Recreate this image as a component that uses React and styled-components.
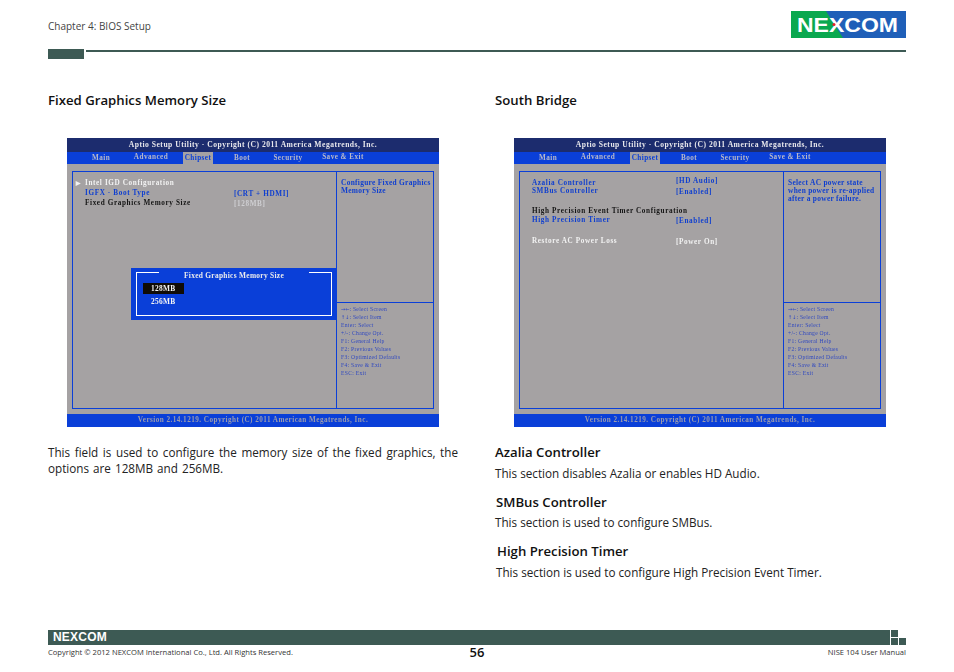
import styled, { createGlobalStyle } from 'styled-components';

const GlobalStyle = createGlobalStyle`
    html, body {
        margin: 0;
        padding: 0;
        background: #ffffff;
    }
`;

const DARK = '#3d5a54';
const BLUE = '#0a3fd8';
const GRAY = '#a5a2a3';

const helpKeys = [
    { glyph: '→←', text: ': Select Screen' },
    { glyph: '↑↓', text: ': Select Item' },
    { text: 'Enter: Select' },
    { text: '+/-: Change Opt.' },
    { text: 'F1: General Help' },
    { text: 'F2: Previous Values' },
    { text: 'F3: Optimized Defaults' },
    { text: 'F4: Save & Exit' },
    { text: 'ESC: Exit' },
];

const tabs = [
    { name: 'Main', width: 40 },
    { name: 'Advanced', width: 60, raised: true },
    { name: 'Chipset', width: 30, active: true },
    { name: 'Boot', width: 58 },
    { name: 'Security', width: 34 },
    { name: 'Save & Exit', width: 76, raised: true },
];

function BiosScreen({ help, children }) {
    return (
        <Bios>
            <BiosTitle>Aptio Setup Utility - Copyright (C) 2011 America Megatrends, Inc.</BiosTitle>
            <TabBar>
                {tabs.map((tab) => (
                    <Tab key={tab.name} $w={tab.width} $active={tab.active} $raised={tab.raised}>{tab.name}</Tab>
                ))}
            </TabBar>
            <BiosBody>
                <Frame>
                    <Settings>{children}</Settings>
                    <Side>
                        <HelpText>{help}</HelpText>
                        <Keys>
                            {helpKeys.map((k) => (
                                <div key={k.text}>
                                    {k.glyph && <KeyGlyph>{k.glyph}</KeyGlyph>}
                                    {k.text}
                                </div>
                            ))}
                        </Keys>
                    </Side>
                </Frame>
            </BiosBody>
            <BiosFooter>Version 2.14.1219. Copyright (C) 2011 American Megatrends, Inc.</BiosFooter>
        </Bios>
    );
}

function Logo() {
    return (
        <svg width="115" height="27" viewBox="0 0 115 27">
            <rect width="115" height="27" fill="#1f5fb8" />
            <polygon points="0,0 35,0 52,27 0,27" fill="#0aa84f" />
            <text x="6" y="21" fontFamily="Liberation Sans, sans-serif" fontWeight="700" fontSize="20.5" fill="#ffffff" textLength="101" lengthAdjust="spacingAndGlyphs">NEXCOM</text>
            <circle cx="43" cy="13.5" r="1.5" fill="#e8202a" />
        </svg>
    );
}

export default function App() {
    return (
        <Page>
            <GlobalStyle />
            <Header>
                <Chapter>Chapter 4: BIOS Setup</Chapter>
                <Logo />
            </Header>
            <Rule>
                <RuleBlock />
                <RuleLine />
            </Rule>
            <Columns>
                <Column>
                    <Heading>Fixed Graphics Memory Size</Heading>
                    <BiosWrap>
                        <BiosScreen help={<>Configure Fixed Graphics<br />Memory Size</>}>
                            <Row $tone="white">
                                <Arrow>►</Arrow>
                                <Label>Intel IGD Configuration</Label>
                            </Row>
                            <Row $tone="blue">
                                <Label>IGFX - Boot Type</Label>
                                <Value>[CRT + HDMI]</Value>
                            </Row>
                            <Row $tone="black">
                                <Label>Fixed Graphics Memory Size</Label>
                                <Value $tone="dim">[128MB]</Value>
                            </Row>
                        </BiosScreen>
                        <Popup>
                            <PopupFrame>
                                <PopupTitle>Fixed Graphics Memory Size</PopupTitle>
                                <PopupOption $selected>128MB</PopupOption>
                                <PopupOption>256MB</PopupOption>
                            </PopupFrame>
                        </Popup>
                    </BiosWrap>
                    <Paragraph>
                        This field is used to configure the memory size of the fixed graphics, the options are 128MB and 256MB.
                    </Paragraph>
                </Column>
                <Column>
                    <Heading>South Bridge</Heading>
                    <BiosWrap>
                        <BiosScreen help={<>Select AC power state<br />when power is re-applied<br />after a power failure.</>}>
                            <Row $tone="blue" $h={8}>
                                <Label $w={144}>Azalia Controller</Label>
                                <Value $raise={3}>[HD Audio]</Value>
                            </Row>
                            <Row $tone="blue" $h={12}>
                                <Label $w={144}>SMBus Controller</Label>
                                <Value>[Enabled]</Value>
                            </Row>
                            <Row $tone="black" $top={8} $h={9}>
                                <Label>High Precision Event Timer Configuration</Label>
                            </Row>
                            <Row $tone="blue" $h={12}>
                                <Label $w={144}>High Precision Timer</Label>
                                <Value>[Enabled]</Value>
                            </Row>
                            <Row $tone="white" $top={9}>
                                <Label $w={144}>Restore AC Power Loss</Label>
                                <Value>[Power On]</Value>
                            </Row>
                        </BiosScreen>
                    </BiosWrap>
                    <Section $top={17}>
                        <SectionTitle>Azalia Controller</SectionTitle>
                        <SectionText>This section disables Azalia or enables HD Audio.</SectionText>
                    </Section>
                    <Section $shift={1}>
                        <SectionTitle>SMBus Controller</SectionTitle>
                        <SectionText $shift={-1}>This section is used to configure SMBus.</SectionText>
                    </Section>
                    <Section $shift={2}>
                        <SectionTitle>High Precision Timer</SectionTitle>
                        <SectionText $shift={-1}>This section is used to configure High Precision Event Timer.</SectionText>
                    </Section>
                </Column>
            </Columns>
            <Footer>
                <FooterTop>
                    <FooterBar>
                        <FooterBrand>NEXCOM</FooterBrand>
                    </FooterBar>
                    <Squares>
                        <Square />
                        <span />
                        <Square />
                        <Square />
                    </Squares>
                </FooterTop>
                <FooterNotes>
                    <span>Copyright © 2012 NEXCOM International Co., Ltd. All Rights Reserved.</span>
                    <PageNumber>56</PageNumber>
                    <span>NISE 104 User Manual</span>
                </FooterNotes>
            </Footer>
        </Page>
    );
}

const Page = styled.div`
    box-sizing: border-box;
    width: 954px;
    height: 672px;
    padding: 11px 48px 0;
    font-family: 'Open Sans', sans-serif;
    color: #222;
    overflow: hidden;
    display: flex;
    flex-direction: column;
`;

const Header = styled.div`
    display: flex;
    justify-content: space-between;
    align-items: center;
    height: 27px;
`;

const Chapter = styled.div`
    font-size: 10px;
    padding-top: 2px;
    color: #444;
`;

const Rule = styled.div`
    display: flex;
    align-items: flex-start;
    gap: 2px;
    margin-top: 11px;
    height: 10px;
`;

const RuleBlock = styled.div`
    width: 36px;
    height: 10px;
    background: ${DARK};
`;

const RuleLine = styled.div`
    flex: 1;
    height: 2px;
    margin-top: 1px;
    background: ${DARK};
`;

const Columns = styled.div`
    display: grid;
    grid-template-columns: 410px 411px;
    column-gap: 37px;
    margin-top: 32px;
    flex: 1;
`;

const Column = styled.div`
    display: flex;
    flex-direction: column;
    align-items: flex-start;
`;

const Heading = styled.div`
    font-size: 13.2px;
    font-weight: 600;
    line-height: 18px;
    color: #111;
`;

const BiosWrap = styled.div`
    position: relative;
    margin: 29px 0 0 19px;
    filter: blur(0.3px);
`;

const Bios = styled.div`
    width: 372px;
    height: 289px;
    display: flex;
    flex-direction: column;
    font-family: 'Liberation Serif', serif;
    font-weight: 700;
    font-size: 7.2px;
    letter-spacing: 0.62px;
`;

const BiosTitle = styled.div`
    height: 14px;
    line-height: 13px;
    text-align: center;
    font-size: 7.6px;
    letter-spacing: 0.5px;
    background: #1c2c6e;
    color: #e8e8ec;
`;

const TabBar = styled.div`
    height: 12px;
    display: flex;
    background: ${BLUE};
    padding-left: 14px;
`;

const Tab = styled.div`
    width: ${(p) => p.$w}px;
    margin-left: ${(p) => (p.$active ? 2 : 0)}px;
    text-align: center;
    letter-spacing: 0.45px;
    line-height: ${(p) => (p.$raised ? '10px' : '13px')};
    background: ${(p) => (p.$active ? GRAY : 'transparent')};
    color: ${(p) => (p.$active ? BLUE : '#b9b9c8')};
`;

const BiosBody = styled.div`
    flex: 1;
    background: ${GRAY};
    padding: 7px 5px 5px;
    display: flex;
`;

const Frame = styled.div`
    flex: 1;
    box-sizing: border-box;
    border: 1px solid ${BLUE};
    display: grid;
    grid-template-columns: 263px 1fr;
`;

const Settings = styled.div`
    padding: 7px 0 0 12px;
    display: flex;
    flex-direction: column;
`;

const toneColors = {
    white: '#f2f2f2',
    dim: '#cfcfd2',
    blue: '#0f3fd0',
    black: '#151515',
};

const Row = styled.div`
    position: relative;
    display: flex;
    height: ${(p) => p.$h || 10}px;
    line-height: 8px;
    white-space: nowrap;
    margin-top: ${(p) => p.$top || 0}px;
    color: ${(p) => toneColors[p.$tone]};
`;

const Arrow = styled.span`
    position: absolute;
    left: -11px;
    top: 0;
    font-size: 8.5px;
`;

const Label = styled.div`
    width: ${(p) => p.$w || 149}px;
`;

const Value = styled.div`
    color: ${(p) => (p.$tone ? toneColors[p.$tone] : 'inherit')};
    margin-top: ${(p) => (p.$raise ? 1 - p.$raise : 1)}px;
`;

const Side = styled.div`
    border-left: 1px solid ${BLUE};
    display: flex;
    flex-direction: column;
`;

const HelpText = styled.div`
    box-sizing: border-box;
    height: 131px;
    padding: 7px 0 0 4px;
    line-height: 8px;
    font-size: 7.4px;
    letter-spacing: 0.3px;
    color: #0f3fd0;
    border-bottom: 1px solid ${BLUE};
    white-space: nowrap;
    overflow: hidden;
`;

const Keys = styled.div`
    padding: 2px 0 0 4px;
    line-height: 8px;
    font-size: 5.6px;
    letter-spacing: 0.3px;
    font-weight: 400;
    color: #2f48c0;
`;

const KeyGlyph = styled.span`
    font-family: 'DejaVu Sans', sans-serif;
    font-size: 5px;
    letter-spacing: 0;
`;

const BiosFooter = styled.div`
    height: 13px;
    line-height: 13px;
    text-align: center;
    letter-spacing: 0.45px;
    background: ${BLUE};
    color: #9b9cae;
`;

const Popup = styled.div`
    position: absolute;
    left: 64px;
    top: 130px;
    box-sizing: border-box;
    width: 205px;
    height: 52px;
    padding: 4px 4px 4px 5px;
    background: ${BLUE};
    font-family: 'Liberation Serif', serif;
    font-weight: 700;
    font-size: 7.4px;
    letter-spacing: 0.3px;
    color: #ececec;
    display: flex;
`;

const PopupFrame = styled.div`
    flex: 1;
    position: relative;
    box-sizing: border-box;
    border: 1px solid #ffffff;
    padding: 10px 0 0 6px;
`;

const PopupTitle = styled.div`
    position: absolute;
    top: -2px;
    left: 22px;
    width: 150px;
    text-align: center;
    line-height: 9px;
    background: ${BLUE};
`;

const PopupOption = styled.div`
    width: 41px;
    height: 11px;
    line-height: 11px;
    padding-left: 8px;
    box-sizing: border-box;
    margin-bottom: 2px;
    background: ${(p) => (p.$selected ? '#100c05' : 'transparent')};
    color: #f4f4f4;
`;

const Paragraph = styled.p`
    margin: 17px 0 0;
    width: 410px;
    font-size: 11.7px;
    word-spacing: 1px;
    line-height: 16px;
    text-align: justify;
    color: #222;
`;

const Section = styled.div`
    margin-left: ${(p) => p.$shift || 0}px;
    margin-top: ${(p) => p.$top || 13}px;
`;

const SectionTitle = styled.div`
    font-size: 13.2px;
    font-weight: 600;
    line-height: 16px;
    color: #111;
`;

const SectionText = styled.div`
    margin-left: ${(p) => p.$shift || 0}px;
    margin-top: 4.5px;
    font-size: 11.7px;
    line-height: 16px;
    color: #222;
`;

const Footer = styled.div`
    margin-bottom: 13px;
`;

const FooterTop = styled.div`
    display: flex;
    gap: 1px;
`;

const FooterBar = styled.div`
    flex: 1;
    height: 15px;
    background: ${DARK};
    padding-left: 5px;
`;

const FooterBrand = styled.span`
    font-family: 'Liberation Sans', sans-serif;
    font-weight: 700;
    font-size: 12px;
    line-height: 15px;
    letter-spacing: 0.2px;
    color: #ffffff;
    display: block;
`;

const Squares = styled.div`
    display: grid;
    grid-template-columns: 7px 7px;
    grid-template-rows: 7px 7px;
    gap: 1px;
`;

const Square = styled.div`
    background: ${DARK};
`;

const FooterNotes = styled.div`
    display: grid;
    grid-template-columns: 1fr auto 1fr;
    align-items: center;
    font-size: 7.6px;
    line-height: 14px;
    color: #333;
    span:last-child {
        text-align: right;
    }
`;

const PageNumber = styled.div`
    font-size: 13px;
    font-weight: 600;
    color: #111;
`;
